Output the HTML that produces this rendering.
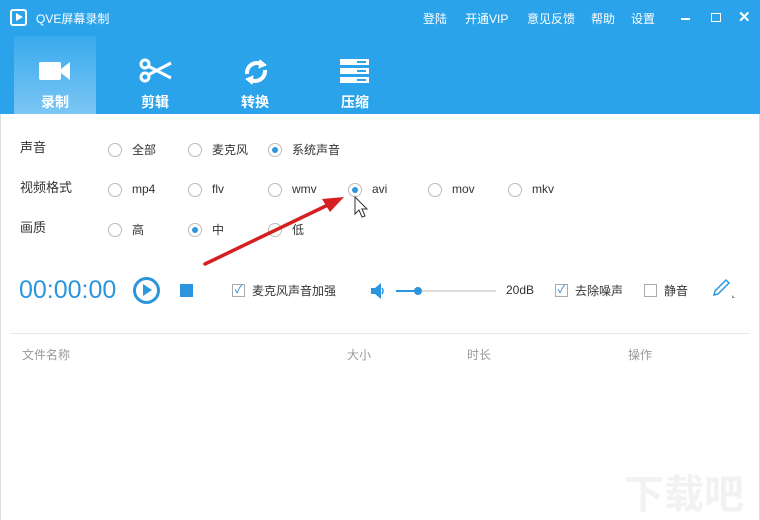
<!DOCTYPE html>
<html><head><meta charset="utf-8"><style>
*{margin:0;padding:0;box-sizing:border-box}
body{width:760px;height:520px;overflow:hidden;background:#fff;font-family:"Liberation Sans","Noto Sans CJK SC",sans-serif;position:relative;color:#333}
.hdr{position:absolute;left:0;top:0;width:760px;height:114px;background:#2ba3ea}
.a{position:absolute;white-space:nowrap}
.w{color:#fff;font-size:12px}
.tab{position:absolute;top:36px;width:82px;height:78px;text-align:center;color:#fff;font-size:15px;font-weight:bold}
.tab span{position:absolute;left:0;right:0;top:56px;font-size:14px}
.r{position:absolute;width:14px;height:14px;border:1px solid #bbb;border-radius:50%;background:#fff}
.r.on::after{content:"";position:absolute;left:3px;top:3px;width:6px;height:6px;border-radius:50%;background:#2b95dd}
.t{font-size:12px;color:#333}
.lbl{font-size:13px;color:#333}
.cb{position:absolute;width:13px;height:13px;border:1px solid #aaa;background:#fff;font-size:11px;line-height:11px;text-align:center;color:#2b7fc9}
.g{font-size:12px;color:#999}
</style></head><body>
<div class="hdr"></div>
<div class="a" style="left:10px;top:9px;width:17px;height:17px;border:2px solid #fff;border-radius:3px"></div>
<div class="a" style="left:16px;top:13px;width:0;height:0;border-left:7px solid #fff;border-top:4.5px solid transparent;border-bottom:4.5px solid transparent"></div>
<div class="a w" style="left:36px;top:10px;font-size:12px">QVE屏幕录制</div>
<div class="a w" style="left:423px;top:10px">登陆</div>
<div class="a w" style="left:465px;top:10px">开通VIP</div>
<div class="a w" style="left:527px;top:10px">意见反馈</div>
<div class="a w" style="left:591px;top:10px">帮助</div>
<div class="a w" style="left:631px;top:10px">设置</div>
<div class="a" style="left:681px;top:18px;width:9px;height:2px;background:#fff"></div>
<div class="a" style="left:711px;top:13px;width:10px;height:9px;border:1.5px solid #fff"></div>
<div class="a w" style="left:738px;top:8px;font-size:15px;font-weight:bold">✕</div>
<div class="tab" style="left:14px;background:linear-gradient(#38aaee,#7cc6f3)"><svg width="32" height="22" style="position:absolute;left:25px;top:24px"><rect x="0" y="2" width="22" height="18" rx="2" fill="#fff"/><path d="M22 9 L31 2 V20 L22 13Z" fill="#fff"/></svg><span>录制</span></div>
<div class="tab" style="left:114px"><svg width="34" height="26" style="position:absolute;left:25px;top:22px" fill="none" stroke="#fff" stroke-width="3"><circle cx="6" cy="6" r="4"/><circle cx="6" cy="19" r="4"/><path d="M9 8 L32 20 M9 17 L32 5"/></svg><span>剪辑</span></div>
<div class="tab" style="left:214px"><svg width="30" height="30" style="position:absolute;left:27px;top:21px" fill="none" stroke="#fff" stroke-width="4"><path d="M6 17 A10 10 0 0 1 22 8"/><path d="M24 13 A10 10 0 0 1 8 22"/><path d="M19 3 L25 8 L18 11Z" fill="#fff" stroke-width="1"/><path d="M11 27 L5 22 L12 19Z" fill="#fff" stroke-width="1"/></svg><span>转换</span></div>
<div class="tab" style="left:314px"><svg width="30" height="24" style="position:absolute;left:26px;top:23px"><rect x="0" y="0" width="29" height="6" fill="#fff"/><rect x="0" y="9" width="29" height="6" fill="#fff"/><rect x="0" y="18" width="29" height="6" fill="#fff"/><rect x="17" y="2" width="9" height="2" fill="#2ba3ea"/><rect x="17" y="11" width="9" height="2" fill="#2ba3ea"/><rect x="17" y="20" width="9" height="2" fill="#2ba3ea"/></svg><span>压缩</span></div>

<div class="a lbl" style="left:20px;top:137px">声音</div>
<div class="a lbl" style="left:20px;top:177px">视频格式</div>
<div class="a lbl" style="left:20px;top:217px">画质</div>
<div class="r" style="left:108px;top:143px"></div><div class="a t" style="left:132px;top:141px">全部</div>
<div class="r" style="left:188px;top:143px"></div><div class="a t" style="left:212px;top:141px">麦克风</div>
<div class="r on" style="left:268px;top:143px"></div><div class="a t" style="left:292px;top:141px">系统声音</div>
<div class="r" style="left:108px;top:183px"></div><div class="a t" style="left:132px;top:182px">mp4</div>
<div class="r" style="left:188px;top:183px"></div><div class="a t" style="left:212px;top:182px">flv</div>
<div class="r" style="left:268px;top:183px"></div><div class="a t" style="left:292px;top:182px">wmv</div>
<div class="r on" style="left:348px;top:183px"></div><div class="a t" style="left:372px;top:182px">avi</div>
<div class="r" style="left:428px;top:183px"></div><div class="a t" style="left:452px;top:182px">mov</div>
<div class="r" style="left:508px;top:183px"></div><div class="a t" style="left:532px;top:182px">mkv</div>
<div class="r" style="left:108px;top:223px"></div><div class="a t" style="left:132px;top:221px">高</div>
<div class="r on" style="left:188px;top:223px"></div><div class="a t" style="left:212px;top:221px">中</div>
<div class="r" style="left:268px;top:223px"></div><div class="a t" style="left:292px;top:221px">低</div>

<svg class="a" style="left:0;top:0" width="760" height="520">
<path d="M205 264 L332 203" stroke="#d42020" stroke-width="3.5" stroke-linecap="round"/>
<path d="M344 197 L322 199 L330 212Z" fill="#d42020"/>
<path d="M355 197 V214 L359 210 L362 217 L365 216 L362 209 L367 209Z" fill="#fff" stroke="#333" stroke-width="1"/>
</svg>

<div class="a" style="left:19px;top:276px;font-size:25px;color:#2b95dd">00:00:00</div>
<div class="a" style="left:133px;top:277px;width:27px;height:27px;border:3px solid #2b95dd;border-radius:50%"></div>
<div class="a" style="left:143px;top:284px;border-left:9px solid #2b95dd;border-top:6.5px solid transparent;border-bottom:6.5px solid transparent"></div>
<div class="a" style="left:180px;top:284px;width:13px;height:13px;background:#2b95dd"></div>
<div class="cb" style="left:232px;top:284px">✓</div><div class="a t" style="left:252px;top:282px">麦克风声音加强</div>
<svg class="a" style="left:371px;top:283px" width="14" height="16"><path d="M0 5 H4 L10 0 V16 L4 11 H0Z" fill="#2b95dd"/><path d="M11 5 Q13 8 11 11" stroke="#2b95dd" stroke-width="1.5" fill="none"/></svg>
<div class="a" style="left:396px;top:290px;width:100px;height:2px;background:#ddd"></div>
<div class="a" style="left:396px;top:290px;width:22px;height:2px;background:#2b95dd"></div>
<div class="a" style="left:414px;top:287px;width:8px;height:8px;border-radius:50%;background:#2b95dd"></div>
<div class="a t" style="left:506px;top:283px">20dB</div>
<div class="cb" style="left:555px;top:284px">✓</div><div class="a t" style="left:575px;top:282px">去除噪声</div>
<div class="cb" style="left:644px;top:284px"></div><div class="a t" style="left:664px;top:282px">静音</div>
<svg class="a" style="left:711px;top:278px" width="24" height="20"><path d="M3 17 L4 13 L15 2 L18 5 L7 16Z" fill="none" stroke="#2b95dd" stroke-width="1.5"/><path d="M21 17 L24 20 H21Z" fill="#888"/></svg>

<div class="a" style="left:10px;top:333px;width:740px;height:1px;background:#e6e6e6"></div>
<div class="a g" style="left:22px;top:346px">文件名称</div>
<div class="a g" style="left:347px;top:346px">大小</div>
<div class="a g" style="left:467px;top:346px">时长</div>
<div class="a g" style="left:628px;top:346px">操作</div>
<div class="a" style="left:624px;top:462px;font-size:40px;color:#f2f2f2;font-weight:bold">下载吧</div>
<div class="a" style="left:0;top:114px;width:1px;height:406px;background:#ddd"></div>
<div class="a" style="left:759px;top:114px;width:1px;height:406px;background:#ddd"></div>
</body></html>
